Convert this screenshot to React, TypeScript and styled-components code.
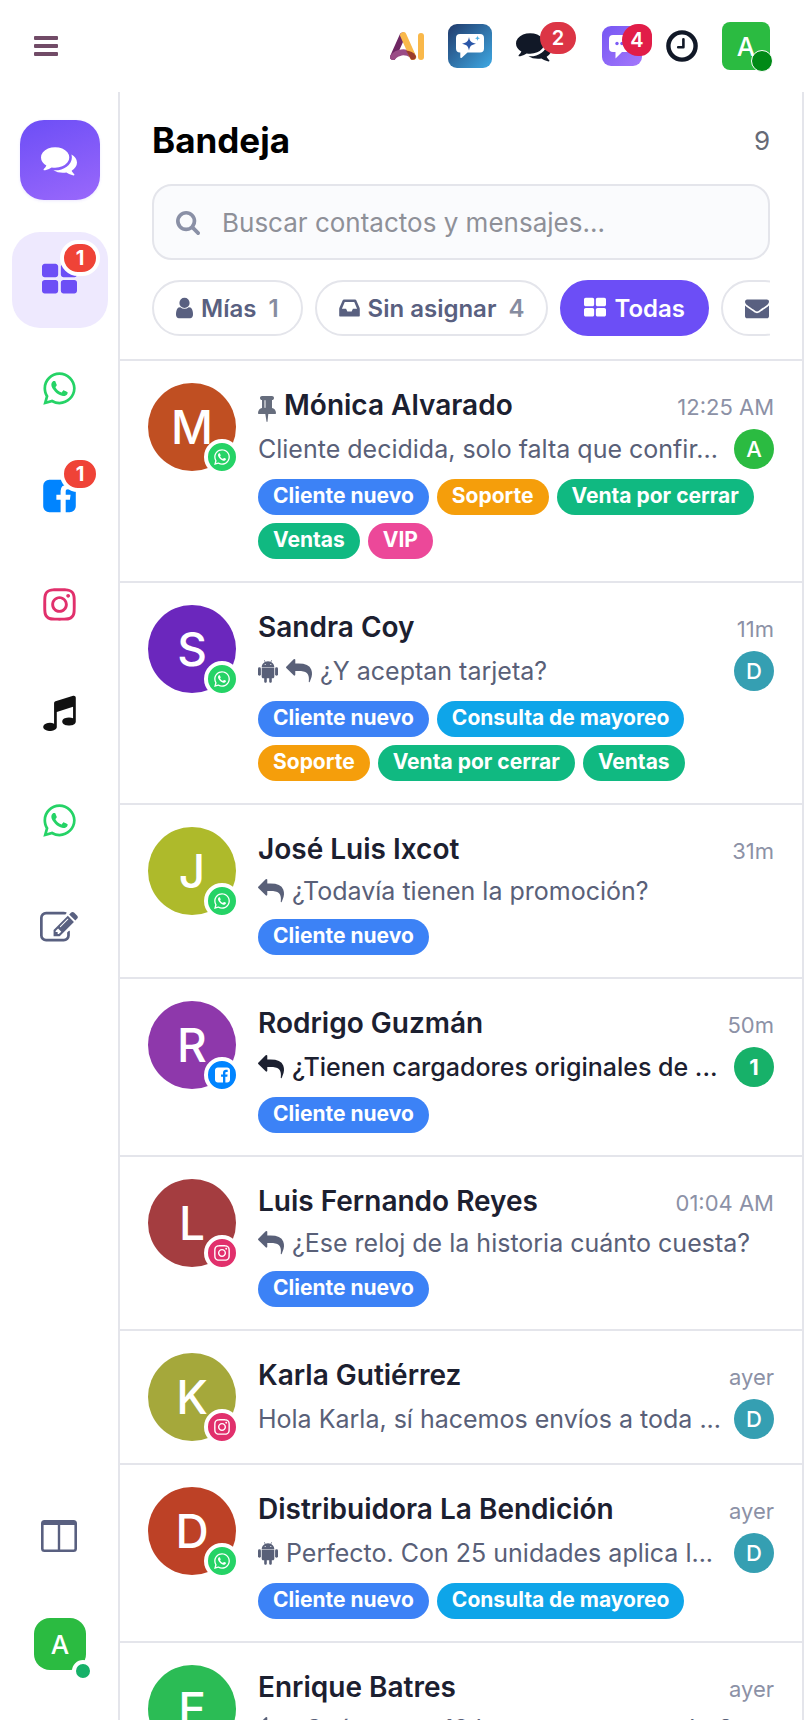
import React from "react";
import styled, { createGlobalStyle } from "styled-components";
import { FaWhatsapp, FaInstagram } from "react-icons/fa";

const GlobalStyle = createGlobalStyle`
  *, *::before, *::after { box-sizing: border-box; }
  body {
    margin: 0;
    background: #fff;
    color: #1c2030;
    font-family: Inter, "Liberation Sans", sans-serif;
  }
  button, input { font: inherit; color: inherit; }
  button { border: 0; padding: 0; background: none; cursor: pointer; }
  svg { display: block; flex: none; }
`;

/* ---------- icons ---------- */

type Glyph = { x: number; w: number; d: string };

const glyphs: Record<string, Glyph> = {
  comments: {
    x: 0,
    w: 1792,
    d: "M1408 768q0 139-94 257t-256.5 186.5-353.5 68.5q-86 0-176-16-124 88-278 128-36 9-86 16h-3q-11 0-20.5-8t-11.5-21q-1-3-1-6.5t.5-6.5 2-6l2.5-5 3.5-5.5 4-5 4.5-5 4-4.5q5-6 23-25t26-29.5 22.5-29 25-38.5 20.5-44q-124-72-195-177t-71-224q0-139 94-257t256.5-186.5 353.5-68.5 353.5 68.5 256.5 186.5 94 257zm384 256q0 120-71 224.5t-195 176.5q10 24 20.5 44t25 38.5 22.5 29 26 29.5 23 25q1 1 4 4.5t4.5 5 4 5 3.5 5.5l2.5 5 2 6 .5 6.5-1 6.5q-3 14-13 22t-22 7q-50-7-86-16-154-40-278-128-90 16-176 16-271 0-472-132 58 4 88 4 161 0 309-45t264-129q125-92 192-212t67-254q0-77-23-152 129 71 204 178t75 230z",
  },
  user: {
    x: 256,
    w: 1280,
    d: "M1536 1399q0 109-62.5 187t-150.5 78h-854q-88 0-150.5-78t-62.5-187q0-85 8.5-160.5t31.5-152 58.5-131 94-89 134.5-34.5q131 128 313 128t313-128q76 0 134.5 34.5t94 89 58.5 131 31.5 152 8.5 160.5zm-256-887q0 159-112.5 271.5t-271.5 112.5-271.5-112.5-112.5-271.5 112.5-271.5 271.5-112.5 271.5 112.5 112.5 271.5z",
  },
  grid: {
    x: 64,
    w: 1664,
    d: "M832 1024v384q0 52-38 90t-90 38h-512q-52 0-90-38t-38-90v-384q0-52 38-90t90-38h512q52 0 90 38t38 90zm0-768v384q0 52-38 90t-90 38h-512q-52 0-90-38t-38-90v-384q0-52 38-90t90-38h512q52 0 90 38t38 90zm896 768v384q0 52-38 90t-90 38h-512q-52 0-90-38t-38-90v-384q0-52 38-90t90-38h512q52 0 90 38t38 90zm0-768v384q0 52-38 90t-90 38h-512q-52 0-90-38t-38-90v-384q0-52 38-90t90-38h512q52 0 90 38t38 90z",
  },
  inbox: {
    x: 128,
    w: 1536,
    d: "M1151 960h316q-1-3-2.5-8t-2.5-8l-212-496h-708l-212 496q-1 2-2.5 8t-2.5 8h316l95 192h320zm513 30v482q0 26-19 45t-45 19h-1408q-26 0-45-19t-19-45v-482q0-62 25-123l238-552q10-25 36.5-42t52.5-17h832q26 0 52.5 17t36.5 42l238 552q25 61 25 123z",
  },
  envelope: {
    x: 0,
    w: 1792,
    d: "M1792 710v794q0 66-47 113t-113 47h-1472q-66 0-113-47t-47-113v-794q44 49 101 87 362 246 497 345 57 42 92.5 65.5t94.5 48 110 24.5h2q51 0 110-24.5t94.5-48 92.5-65.5q170-123 498-345 57-39 100-87zm0-294q0 79-49 151t-122 123q-376 261-468 325-10 7-42.5 31t-54 38-52 32.5-57.5 27-50 9h-2q-23 0-50-9t-57.5-27-52-32.5-54-38-42.5-31q-91-64-262-182.5t-205-142.5q-62-42-117-115.5t-55-136.5q0-78 41.5-130t118.5-52h1472q65 0 112.5 47t47.5 113z",
  },
  pin: {
    x: 320,
    w: 1152,
    d: "M800 864v-448q0-14-9-23t-23-9-23 9-9 23v448q0 14 9 23t23 9 23-9 9-23zm672 352q0 26-19 45t-45 19h-429l-51 483q-2 12-10.5 20.5t-20.5 8.5h-1q-27 0-32-27l-76-485h-404q-26 0-45-19t-19-45q0-123 78.5-221.5t177.5-98.5v-512q-52 0-90-38t-38-90 38-90 90-38h640q52 0 90 38t38 90-38 90-90 38v512q99 0 177.5 98.5t78.5 221.5z",
  },
  reply: {
    x: 0,
    w: 1792,
    d: "M1792 1120q0 166-127 451-3 7-10.5 24t-13.5 30-13 22q-12 17-28 17-15 0-23.5-10t-8.5-25q0-9 2.5-26.5t2.5-23.5q5-68 5-123 0-101-17.5-181t-48.5-138.5-80-101-105.5-69.5-133-42.5-154-21.5-175.5-6h-224v256q0 26-19 45t-45 19-45-19l-512-512q-19-19-19-45t19-45l512-512q19-19 45-19t45 19 19 45v256h224q713 0 875 403 53 134 53 333z",
  },
  search: {
    x: 64,
    w: 1664,
    d: "M1216 832q0-185-131.5-316.5t-316.5-131.5-316.5 131.5-131.5 316.5 131.5 316.5 316.5 131.5 316.5-131.5 131.5-316.5zm512 832q0 52-38 90t-90 38q-54 0-90-38l-343-342q-179 124-399 124-143 0-273.5-55.5t-225-150-150-225-55.5-273.5 55.5-273.5 150-225 225-150 273.5-55.5 273.5 55.5 225 150 150 225 55.5 273.5q0 220-124 399l343 343q37 37 37 90z",
  },
  facebook: {
    x: 128,
    w: 1536,
    d: "M1376 128q119 0 203.5 84.5t84.5 203.5v960q0 119-84.5 203.5t-203.5 84.5h-188v-595h199l30-232h-229v-148q0-56 23.5-84t91.5-28l122-1v-207q-63-9-178-9-136 0-217.5 80t-81.5 226v171h-200v232h200v595h-532q-119 0-203.5-84.5t-84.5-203.5v-960q0-119 84.5-203.5t203.5-84.5h960z",
  },
  music: {
    x: 128,
    w: 1536,
    d: "M1664 224v1120q0 50-34 89t-86 60.5-103.5 32-96.5 10.5-96.5-10.5-103.5-32-86-60.5-34-89 34-89 86-60.5 103.5-32 96.5-10.5q105 0 192 39v-537l-768 237v709q0 50-34 89t-86 60.5-103.5 32-96.5 10.5-96.5-10.5-103.5-32-86-60.5-34-89 34-89 86-60.5 103.5-32 96.5-10.5q105 0 192 39v-967q0-31 19-56.5t49-35.5l832-256q12-4 28-4 40 0 68 28t28 68z",
  },
  edit: {
    x: 0,
    w: 1792,
    d: "M888 1184l116-116-152-152-116 116v56h96v96h56zm440-720q-16-16-33 1l-350 350q-17 17-1 33t33-1l350-350q17-17 1-33zm80 594v190q0 119-84.5 203.5t-203.5 84.5h-832q-119 0-203.5-84.5t-84.5-203.5v-832q0-119 84.5-203.5t203.5-84.5h832q63 0 117 25 15 7 18 23 3 17-9 29l-49 49q-14 14-32 8-23-6-45-6h-832q-66 0-113 47t-47 113v832q0 66 47 113t113 47h832q66 0 113-47t47-113v-126q0-13 9-22l64-64q15-15 35-7t20 29zm-96-738l288 288-672 672h-288v-288zm444 132l-92 92-288-288 92-92q28-28 68-28t68 28l152 152q28 28 28 68t-28 68z",
  },
};

function Icon({ name, size }: { name: string; size: number }) {
  const g = glyphs[name];
  return (
    <svg
      width={Math.round((g.w / 1792) * size)}
      height={size}
      viewBox={`${g.x} 0 ${g.w} 1792`}
      fill="currentColor"
      aria-hidden="true"
    >
      <path d={g.d} />
    </svg>
  );
}

const AndroidIcon = () => (
  <svg width="20" height="24" viewBox="0 0 20 24" fill="currentColor" aria-hidden="true">
    <path
      fillRule="evenodd"
      d="M3.7 8C3.8 5.7 5 4 6.900 3L5.900 1.200l.5-.3 1 1.900a7 7 0 0 1 5.200 0l1-1.900.5.3L13.100 3c1.900 1 3.100 2.700 3.200 5zM7.200 4.900a.6.6 0 1 0 0 1.200.6.6 0 0 0 0-1.200zm5.600 0a.6.6 0 1 0 0 1.200.6.6 0 0 0 0-1.200z"
    />
    <path d="M3.700 8.500h12.600v9.300c0 .9-.6 1.500-1.500 1.500h-1v3.100c0 1.700-2.600 1.700-2.600 0v-3.100H8.800v3.100c0 1.700-2.600 1.700-2.600 0v-3.100h-1c-.9 0-1.500-.6-1.500-1.500z" />
    <rect x="0" y="8.300" width="2.900" height="8.400" rx="1.400" />
    <rect x="17.100" y="8.300" width="2.900" height="8.400" rx="1.400" />
  </svg>
);

const ColumnsIcon = () => (
  <svg width="36" height="32" viewBox="0 0 36 32" aria-hidden="true">
    <path
      fill="currentColor"
      fillRule="evenodd"
      d="M3.500 0h29A3.500 3.500 0 0 1 36 3.500v25a3.500 3.500 0 0 1-3.500 3.500h-29A3.500 3.500 0 0 1 0 28.500v-25A3.500 3.500 0 0 1 3.500 0zM2.600 5v23.700c0 .4.3.7.7.7h13.500V5zm16.600 0v24.400h13.500c.4 0 .7-.3.7-.7V5z"
    />
  </svg>
);

const AiLogo = () => (
  <svg width="34" height="28" viewBox="0 0 34 28" fill="none" strokeLinecap="round" aria-hidden="true">
    <path d="M3 25L12.600 3.500" stroke="#6f2763" strokeWidth="6" />
    <path d="M3 25C7 20 15 18.500 22 23" stroke="#9a4b86" strokeWidth="6" />
    <path d="M13.300 3.300L23 25" stroke="#f9b84a" strokeWidth="6.400" />
    <path d="M16 18.600c4 .3 8 2 9.800 5.200 1 3-2.500 5.200-5 3.400z" fill="#9b3c2c" />
    <path d="M31 3.900V24.900" stroke="#f9b84a" strokeWidth="6" />
  </svg>
);

const SparkChat = () => (
  <svg width="44" height="44" viewBox="0 0 44 44" aria-hidden="true">
    <defs>
      <linearGradient id="sparkBg" x1="0" y1="0" x2="1" y2="1">
        <stop offset="0" stopColor="#213a6b" />
        <stop offset="1" stopColor="#3ea9e4" />
      </linearGradient>
    </defs>
    <rect width="44" height="44" rx="9" fill="url(#sparkBg)" />
    <path
      fill="#fff"
      d="M12 10h20a4 4 0 0 1 4 4v10.500a4 4 0 0 1-4 4H19.500L13.500 34l-1.200-.3v-5.200H12a4 4 0 0 1-4-4V14a4 4 0 0 1 4-4z"
    />
    <path fill="#2a56a8" d="M21 13c.9 4.500 2 5.600 7 6.700-5 1.100-6.100 2.200-7 6.800-.9-4.600-2-5.700-7-6.800 5-1.100 6.100-2.200 7-6.700z" />
    <path fill="#4ab0e6" d="M29.500 11.500c.4 2 .8 2.400 2.700 2.800-1.900.4-2.300.8-2.700 2.800-.4-2-.8-2.400-2.700-2.800 1.900-.4 2.300-.8 2.700-2.800z" />
  </svg>
);

const DotsChat = () => (
  <svg width="40" height="40" viewBox="0 0 40 40" aria-hidden="true">
    <defs>
      <linearGradient id="dotsBg" x1="0" y1="0" x2="1" y2="1">
        <stop offset="0" stopColor="#7657f3" />
        <stop offset="1" stopColor="#a478fb" />
      </linearGradient>
    </defs>
    <rect width="40" height="40" rx="9" fill="url(#dotsBg)" />
    <path fill="#fff" d="M11 9h18a4 4 0 0 1 4 4v9a4 4 0 0 1-4 4h-9l-6.500 6.500V26H11a4 4 0 0 1-4-4v-9a4 4 0 0 1 4-4z" />
    <circle cx="15" cy="17.500" r="1.700" fill="#7c5cf5" />
    <circle cx="20" cy="17.500" r="1.700" fill="#7c5cf5" />
    <circle cx="25" cy="17.500" r="1.700" fill="#7c5cf5" />
  </svg>
);

const ClockIcon = () => (
  <svg width="32" height="32" viewBox="0 0 32 32" fill="none" stroke="currentColor" aria-hidden="true">
    <circle cx="16" cy="16" r="13.600" strokeWidth="4.400" />
    <path d="M17.400 9.200v8.100h-5.200" strokeWidth="2.600" strokeLinecap="round" strokeLinejoin="round" />
  </svg>
);

const MenuIcon = () => (
  <svg width="24" height="20" viewBox="0 0 24 20" fill="currentColor" aria-hidden="true">
    <rect width="24" height="4" rx="1" />
    <rect y="8" width="24" height="4" rx="1" />
    <rect y="16" width="24" height="4" rx="1" />
  </svg>
);

/* ---------- layout ---------- */

const Page = styled.div`
  display: flex;
  flex-direction: column;
  height: 100vh;
  overflow: hidden;
`;

const TopBar = styled.header`
  display: flex;
  align-items: center;
  justify-content: space-between;
  flex: none;
  height: 92px;
  padding: 0 34px;
`;

const MenuButton = styled.button`
  color: #714b67;
`;

const Systray = styled.nav`
  display: flex;
  align-items: center;
  gap: 24px;
`;

const TrayButton = styled.button<{ $room?: number }>`
  position: relative;
  color: #111827;
  margin-right: ${(p) => p.$room ?? 0}px;
`;

const TrayBadge = styled.span<{ $wide?: boolean }>`
  position: absolute;
  top: ${(p) => (p.$wide ? -6 : -2)}px;
  left: ${(p) => (p.$wide ? 24 : 20)}px;
  width: ${(p) => (p.$wide ? 36 : 30)}px;
  height: 32px;
  border-radius: ${(p) => (p.$wide ? "16px" : "16px 12px 12px 16px")};
  background: ${(p) => (p.$wide ? "#dc3545" : "#e11d48")};
  color: #fff;
  font-size: 20px;
  font-weight: 600;
  line-height: 32px;
`;

const UserSquare = styled.button<{ $size: number; $radius: number }>`
  position: relative;
  flex: none;
  width: ${(p) => p.$size}px;
  height: ${(p) => p.$size}px;
  border-radius: ${(p) => p.$radius}px;
  background: #2bbb41;
  color: #fff;
  font-size: 26px;
  font-weight: 500;
`;

const Presence = styled.span<{ $color: string; $ring: number }>`
  position: absolute;
  right: ${(p) => (p.$ring > 2 ? -16 : -3)}px;
  bottom: ${(p) => (p.$ring > 2 ? -12 : -2)}px;
  width: 22px;
  height: 22px;
  border: ${(p) => p.$ring}px solid #fff;
  border-radius: 50%;
  background: ${(p) => p.$color};
  ${(p) => p.$ring > 2 && "right: -8px;"}
`;

const Body = styled.div`
  display: flex;
  flex: 1;
  min-height: 0;
`;

const Sidebar = styled.nav`
  display: flex;
  flex-direction: column;
  align-items: center;
  flex: none;
  width: 120px;
  padding: 28px 0 50px 2px;
  border-right: 2px solid #e4e5eb;
`;

const Brand = styled.div`
  display: flex;
  align-items: center;
  justify-content: center;
  flex: none;
  width: 80px;
  height: 80px;
  margin-bottom: 32px;
  padding-right: 2px;
  border-radius: 24px;
  background: linear-gradient(160deg, #6c4ef6, #9a68fb);
  box-shadow: 0 1px 3px rgba(108, 78, 246, 0.12);
  color: #fff;
`;

const ChannelList = styled.div`
  display: flex;
  flex-direction: column;
  gap: 12px;
`;

const SideItem = styled.button<{ $color: string; $active?: boolean }>`
  position: relative;
  display: flex;
  align-items: center;
  justify-content: center;
  flex: none;
  width: 96px;
  height: 96px;
  padding-right: 2px;
  border-radius: 28px;
  background: ${(p) => (p.$active ? "#eee9fe" : "transparent")};
  color: ${(p) => p.$color};
`;

const SideBadge = styled.span`
  position: absolute;
  top: 8px;
  right: 8px;
  width: 40px;
  height: 36px;
  border: 4px solid #fff;
  border-radius: 18px;
  background: #ef4337;
  color: #fff;
  font-size: 20px;
  font-weight: 700;
  line-height: 28px;
`;

const SideBottom = styled.div`
  display: flex;
  flex-direction: column;
  align-items: center;
  gap: 34px;
  margin-top: auto;
`;

const Inbox = styled.main`
  display: flex;
  flex-direction: column;
  flex: 1;
  min-width: 0;
  border-right: 2px solid #e4e5eb;
`;

const InboxHead = styled.div`
  flex: none;
  padding: 28px 32px 23px;
  border-bottom: 2px solid #e4e5eb;
`;

const TitleRow = styled.div`
  display: flex;
  align-items: center;
  justify-content: space-between;
  height: 40px;
  margin-bottom: 24px;
`;

const Title = styled.h1`
  margin: 0;
  color: #000;
  font-size: 35px;
  font-weight: 700;
`;

const Total = styled.span`
  color: #666a76;
  font-size: 26px;
`;

const SearchBox = styled.label`
  display: flex;
  align-items: center;
  gap: 22px;
  height: 76px;
  margin-bottom: 20px;
  padding: 0 22px;
  border: 2px solid #e4e5eb;
  border-radius: 20px;
  background: #fafbfd;
  color: #8a90a6;
`;

const SearchInput = styled.input`
  flex: 1;
  min-width: 0;
  padding: 0;
  border: 0;
  outline: 0;
  background: none;
  color: #1c2030;
  font-size: 26px;
  &::placeholder { color: #8e9098; opacity: 1; }
`;

const Chips = styled.div`
  display: flex;
  gap: 12px;
  overflow: hidden;
`;

const Chip = styled.button<{ $active?: boolean }>`
  display: flex;
  align-items: center;
  flex: none;
  gap: 8px;
  height: 56px;
  padding: 0 22px;
  border: 2px solid ${(p) => (p.$active ? "#6c4ef6" : "#e4e5eb")};
  border-radius: 28px;
  background: ${(p) => (p.$active ? "#6c4ef6" : "#fff")};
  color: ${(p) => (p.$active ? "#fff" : "#596080")};
  font-size: 24px;
  font-weight: 600;
`;

const ChipCount = styled.span`
  margin-left: 4px;
  color: #868ca0;
`;

const Conversations = styled.ul`
  flex: 1;
  min-height: 0;
  margin: 0;
  padding: 0;
  overflow: hidden;
  list-style: none;
`;

const Conversation = styled.li`
  display: flex;
  gap: 22px;
  padding: 22px 28px;
  border-bottom: 2px solid #e4e5eb;
`;

const Avatar = styled.div<{ $color: string }>`
  position: relative;
  flex: none;
  width: 88px;
  height: 88px;
  border-radius: 50%;
  background: ${(p) => p.$color};
  color: #fff;
  font-size: 46px;
  font-weight: 500;
  line-height: 88px;
  text-align: center;
`;

const ChannelBadge = styled.span<{ $color: string }>`
  position: absolute;
  right: -4px;
  bottom: -4px;
  display: flex;
  align-items: center;
  justify-content: center;
  width: 36px;
  height: 36px;
  border: 4px solid #fff;
  border-radius: 50%;
  background: ${(p) => p.$color};
`;

const Details = styled.div`
  flex: 1;
  min-width: 0;
  padding-top: 4px;
`;

const NameRow = styled.div`
  display: flex;
  align-items: baseline;
  justify-content: space-between;
  gap: 16px;
  height: 36px;
  margin-bottom: 6px;
  line-height: 36px;
`;

const Name = styled.h2`
  margin: 0;
  font-size: 28px;
  font-weight: 600;
  white-space: nowrap;
  svg {
    display: inline-block;
    margin-right: 8px;
    color: #666d7d;
    vertical-align: text-bottom;
  }
`;

const Time = styled.time`
  flex: none;
  color: #8c91a6;
  font-size: 22px;
`;

const PreviewRow = styled.div`
  display: flex;
  align-items: center;
  gap: 8px;
  min-height: 36px;
`;

const Preview = styled.div<{ $unread?: boolean }>`
  display: flex;
  align-items: center;
  flex: 1;
  min-width: 0;
  gap: 8px;
  color: ${(p) => (p.$unread ? "#1c2030" : "#596078")};
  font-size: 25px;
  font-weight: ${(p) => (p.$unread ? 500 : 400)};
  line-height: 32px;
`;

const PreviewText = styled.span`
  overflow: hidden;
  text-overflow: ellipsis;
  white-space: nowrap;
`;

const Bubble = styled.span<{ $color: string; $strong?: boolean }>`
  flex: none;
  width: 40px;
  height: 40px;
  border-radius: 50%;
  background: ${(p) => p.$color};
  color: #fff;
  font-size: 22px;
  font-weight: ${(p) => (p.$strong ? 700 : 500)};
  line-height: 40px;
  text-align: center;
`;

const Tags = styled.div`
  display: flex;
  flex-wrap: wrap;
  gap: 8px;
  margin-top: 10px;
`;

const Tag = styled.span<{ $color: string }>`
  height: 36px;
  padding: 0 15px;
  border-radius: 18px;
  background: ${(p) => p.$color};
  color: #fff;
  font-size: 21px;
  font-weight: 700;
  line-height: 34px;
  white-space: nowrap;
`;

/* ---------- data ---------- */

type Channel = "whatsapp" | "facebook" | "instagram";
type Item = {
  name: string;
  color: string;
  channel: Channel;
  time: string;
  text: string;
  pinned?: boolean;
  bot?: boolean;
  reply?: boolean;
  unread?: number;
  agent?: "A" | "D";
  tags?: string[];
};

const tagColors: Record<string, string> = {
  "Cliente nuevo": "#3c82f6",
  Soporte: "#f59e0b",
  "Venta por cerrar": "#10b981",
  Ventas: "#10b981",
  VIP: "#ec4899",
  "Consulta de mayoreo": "#0ea5e9",
};

const channelColors: Record<Channel, string> = {
  whatsapp: "#25d366",
  facebook: "#0084ff",
  instagram: "#e1306c",
};

const agentColors = { A: "#2bbb41", D: "#359fb2" };

const items: Item[] = [
  { name: "Mónica Alvarado", color: "#c04f22", channel: "whatsapp", time: "12:25 AM", text: "Cliente decidida, solo falta que confir...", pinned: true, agent: "A", tags: ["Cliente nuevo", "Soporte", "Venta por cerrar", "Ventas", "VIP"] },
  { name: "Sandra Coy", color: "#6b27bd", channel: "whatsapp", time: "11m", text: "¿Y aceptan tarjeta?", bot: true, reply: true, agent: "D", tags: ["Cliente nuevo", "Consulta de mayoreo", "Soporte", "Venta por cerrar", "Ventas"] },
  { name: "José Luis Ixcot", color: "#aeba2b", channel: "whatsapp", time: "31m", text: "¿Todavía tienen la promoción?", reply: true, tags: ["Cliente nuevo"] },
  { name: "Rodrigo Guzmán", color: "#8e38ab", channel: "facebook", time: "50m", text: "¿Tienen cargadores originales de ...", reply: true, unread: 1, tags: ["Cliente nuevo"] },
  { name: "Luis Fernando Reyes", color: "#a43d40", channel: "instagram", time: "01:04 AM", text: "¿Ese reloj de la historia cuánto cuesta?", reply: true, tags: ["Cliente nuevo"] },
  { name: "Karla Gutiérrez", color: "#a5a83b", channel: "instagram", time: "ayer", text: "Hola Karla, sí hacemos envíos a toda ...", agent: "D" },
  { name: "Distribuidora La Bendición", color: "#bd4126", channel: "whatsapp", time: "ayer", text: "Perfecto. Con 25 unidades aplica l...", bot: true, agent: "D", tags: ["Cliente nuevo", "Consulta de mayoreo"] },
  { name: "Enrique Batres", color: "#2bbc55", channel: "whatsapp", time: "ayer", text: "¿Cuánto por 12 lentes para revender?", reply: true },
];

function ChannelIcon({ channel, size }: { channel: Channel; size: number }) {
  if (channel === "whatsapp") return <FaWhatsapp size={size} />;
  if (channel === "instagram") return <FaInstagram size={size} />;
  return <Icon name="facebook" size={size} />;
}

function ConversationRow({ item }: { item: Item }) {
  return (
    <Conversation>
      <Avatar $color={item.color}>
        {item.name[0]}
        <ChannelBadge $color={channelColors[item.channel]}>
          <ChannelIcon channel={item.channel} size={18} />
        </ChannelBadge>
      </Avatar>
      <Details>
        <NameRow>
          <Name>
            {item.pinned && <Icon name="pin" size={28} />}
            {item.name}
          </Name>
          <Time>{item.time}</Time>
        </NameRow>
        <PreviewRow>
          <Preview $unread={!!item.unread}>
            {item.bot && <AndroidIcon />}
            {item.reply && <Icon name="reply" size={26} />}
            <PreviewText>{item.text}</PreviewText>
          </Preview>
          {item.unread && <Bubble $color="#17b169" $strong>{item.unread}</Bubble>}
          {item.agent && <Bubble $color={agentColors[item.agent]}>{item.agent}</Bubble>}
        </PreviewRow>
        {item.tags && (
          <Tags>
            {item.tags.map((t) => (
              <Tag key={t} $color={tagColors[t]}>{t}</Tag>
            ))}
          </Tags>
        )}
      </Details>
    </Conversation>
  );
}

export default function App() {
  return (
    <Page>
      <GlobalStyle />
      <TopBar>
        <MenuButton aria-label="Menú"><MenuIcon /></MenuButton>
        <Systray aria-label="Accesos">
          <TrayButton aria-label="Asistente"><AiLogo /></TrayButton>
          <TrayButton aria-label="Chat inteligente"><SparkChat /></TrayButton>
          <TrayButton aria-label="Conversaciones" $room={26}>
            <Icon name="comments" size={36} />
            <TrayBadge $wide>2</TrayBadge>
          </TrayButton>
          <TrayButton aria-label="Mensajes">
            <DotsChat />
            <TrayBadge>4</TrayBadge>
          </TrayButton>
          <TrayButton aria-label="Actividades"><ClockIcon /></TrayButton>
          <UserSquare $size={48} $radius={8} aria-label="Usuario A">
            A
            <Presence $color="#008a17" $ring={1} />
          </UserSquare>
        </Systray>
      </TopBar>
      <Body>
        <Sidebar aria-label="Canales">
          <Brand><Icon name="comments" size={36} /></Brand>
          <ChannelList>
            <SideItem $color="#6c4ef6" $active aria-label="Todos los canales">
              <Icon name="grid" size={38} />
              <SideBadge>1</SideBadge>
            </SideItem>
            <SideItem $color="#25d366" aria-label="WhatsApp"><FaWhatsapp size={37} /></SideItem>
            <SideItem $color="#0084ff" aria-label="Facebook">
              <Icon name="facebook" size={38} />
              <SideBadge>1</SideBadge>
            </SideItem>
            <SideItem $color="#e1306c" aria-label="Instagram"><FaInstagram size={37} /></SideItem>
            <SideItem $color="#111111" aria-label="TikTok"><Icon name="music" size={38} /></SideItem>
            <SideItem $color="#25d366" aria-label="WhatsApp 2"><FaWhatsapp size={37} /></SideItem>
            <SideItem $color="#596080" aria-label="Redactar"><Icon name="edit" size={38} /></SideItem>
          </ChannelList>
          <SideBottom>
            <SideItem $color="#596080" aria-label="Columnas"><ColumnsIcon /></SideItem>
            <UserSquare $size={52} $radius={16} aria-label="Perfil A">
              A
              <Presence $color="#17b169" $ring={4} />
            </UserSquare>
          </SideBottom>
        </Sidebar>
        <Inbox>
          <InboxHead>
            <TitleRow>
              <Title>Bandeja</Title>
              <Total>9</Total>
            </TitleRow>
            <SearchBox>
              <Icon name="search" size={26} />
              <SearchInput type="text" aria-label="Buscar" placeholder="Buscar contactos y mensajes..." />
            </SearchBox>
            <Chips>
              <Chip><Icon name="user" size={24} />Mías<ChipCount>1</ChipCount></Chip>
              <Chip><Icon name="inbox" size={24} />Sin asignar<ChipCount>4</ChipCount></Chip>
              <Chip $active><Icon name="grid" size={24} />Todas</Chip>
              <Chip aria-label="Correo"><Icon name="envelope" size={24} /></Chip>
            </Chips>
          </InboxHead>
          <Conversations>
            {items.map((item) => (
              <ConversationRow key={item.name} item={item} />
            ))}
          </Conversations>
        </Inbox>
      </Body>
    </Page>
  );
}
